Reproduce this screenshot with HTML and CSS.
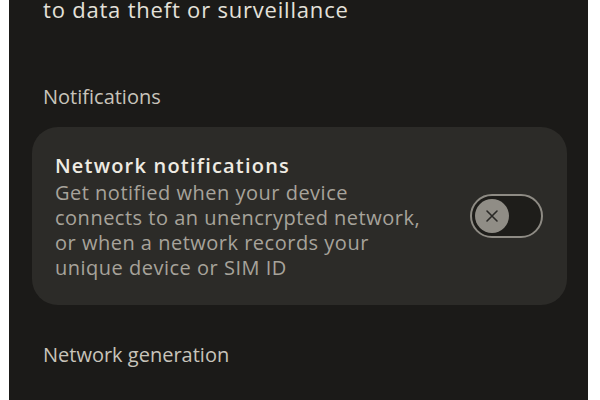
FILE: index.html
```html
<!DOCTYPE html>
<html>
<head>
<meta charset="utf-8">
<link rel="stylesheet" href="styles.css">
</head>
<body>
<div class="screen">
  <p class="lead">to data theft or surveillance</p>
  <h2 class="section section-1">Notifications</h2>
  <div class="card">
    <div class="card-text">
      <div class="card-title">Network notifications</div>
      <div class="card-desc">Get notified when your device<br>connects to an unencrypted network,<br>or when a network records your<br>unique device or SIM ID</div>
    </div>
    <div class="toggle">
      <div class="thumb">
        <svg width="16" height="16" viewBox="0 0 16 16"><path d="M3 3L13 13M13 3L3 13" stroke="#2a2926" stroke-width="1.6" stroke-linecap="round"/></svg>
      </div>
    </div>
  </div>
  <h2 class="section section-2">Network generation</h2>
</div>
</body>
</html>
```
FILE: styles.css
```css
html, body {
  margin: 0;
  padding: 0;
  background: #ffffff;
}
.screen {
  margin: 0 12px 0 9px;
  height: 400px;
  overflow: hidden;
  background: #1b1a18;
  font-family: "Open Sans", "Noto Sans", sans-serif;
  padding: 0 21px 0 23px;
}
.lead {
  margin: 0 0 0 11px;
  font-size: 22px;
  line-height: 18px;
  color: #e4e1da;
  letter-spacing: 0.8px;
  white-space: nowrap;
}
.section {
  margin: 0;
  font-weight: 400;
  font-size: 20px;
  line-height: 24px;
  color: #c8c4bb;
  padding-left: 11px;
}
.section-1 {
  margin-top: 67px;
}
.card {
  margin-top: 18px;
  background: #2c2b28;
  border-radius: 26px;
  height: 178px;
  display: flex;
  align-items: center;
  padding: 0 24px 0 23px;
}
.card-text {
  flex: 1;
}
.card-title {
  font-size: 20px;
  line-height: 28px;
  font-weight: 600;
  color: #efebe3;
  letter-spacing: 1.2px;
}
.card-desc {
  font-size: 20px;
  line-height: 25px;
  color: #a7a39b;
  letter-spacing: 0.5px;
  white-space: nowrap;
}
.toggle {
  width: 66px;
  height: 40px;
  border: 2px solid #8e8b84;
  border-radius: 22px;
  background: #1e1d1a;
  display: flex;
  align-items: center;
  padding-left: 3px;
  box-sizing: content-box;
}
.thumb {
  width: 34px;
  height: 34px;
  border-radius: 50%;
  background: #908d86;
  display: flex;
  align-items: center;
  justify-content: center;
}
.section-2 {
  margin-top: 38px;
}
```
